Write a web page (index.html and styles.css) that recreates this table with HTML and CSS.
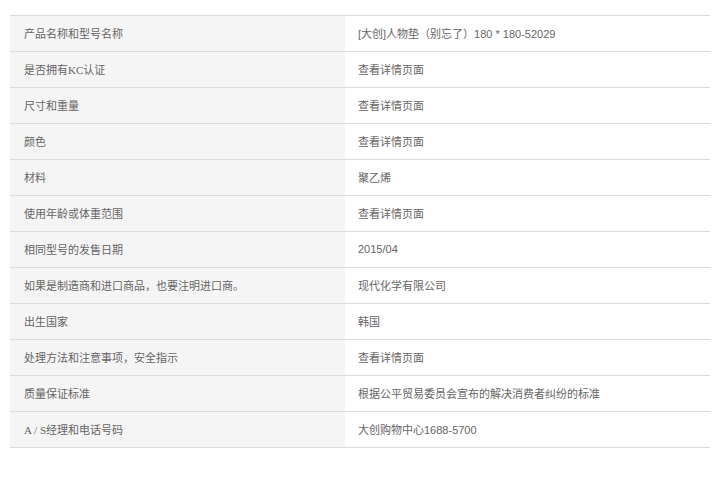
FILE: index.html
```html
<!DOCTYPE html>
<html>
<head>
<meta charset="utf-8">
<link rel="stylesheet" href="styles.css">
</head>
<body>
<table class="spec">
<tbody>
<tr><th>产品名称和型号名称</th><td>[大创]人物垫（别忘了）180 * 180-52029</td></tr>
<tr><th>是否拥有KC认证</th><td>查看详情页面</td></tr>
<tr><th>尺寸和重量</th><td>查看详情页面</td></tr>
<tr><th>颜色</th><td>查看详情页面</td></tr>
<tr><th>材料</th><td>聚乙烯</td></tr>
<tr><th>使用年龄或体重范围</th><td>查看详情页面</td></tr>
<tr><th>相同型号的发售日期</th><td>2015/04</td></tr>
<tr><th>如果是制造商和进口商品，也要注明进口商。</th><td>现代化学有限公司</td></tr>
<tr><th>出生国家</th><td>韩国</td></tr>
<tr><th>处理方法和注意事项，安全指示</th><td>查看详情页面</td></tr>
<tr><th>质量保证标准</th><td>根据公平贸易委员会宣布的解决消费者纠纷的标准</td></tr>
<tr><th>A / S经理和电话号码</th><td>大创购物中心1688-5700</td></tr>
</tbody>
</table>
</body>
</html>
```
FILE: styles.css
```css
html, body {
  margin: 0;
  padding: 0;
  background: #fff;
}
body {
  padding: 15px 10px 0 10px;
}
.spec {
  width: 700px;
  border-collapse: collapse;
  border-top: 1px solid #dcdcdc;
  font-size: 11px;
  color: #666;
}
.spec th, .spec td {
  height: 34px;
  padding: 0 0 1px 0;
  border-bottom: 1px solid #dcdcdc;
  text-align: left;
  font-weight: normal;
  vertical-align: middle;
}
.spec th {
  width: 321px;
  padding-left: 14px;
  background: #f5f5f5;
  font-family: "Liberation Serif", "Noto Sans CJK SC", serif;
}
.spec td {
  padding-left: 13px;
  font-family: "Liberation Sans", "Noto Sans CJK SC", sans-serif;
}
```
